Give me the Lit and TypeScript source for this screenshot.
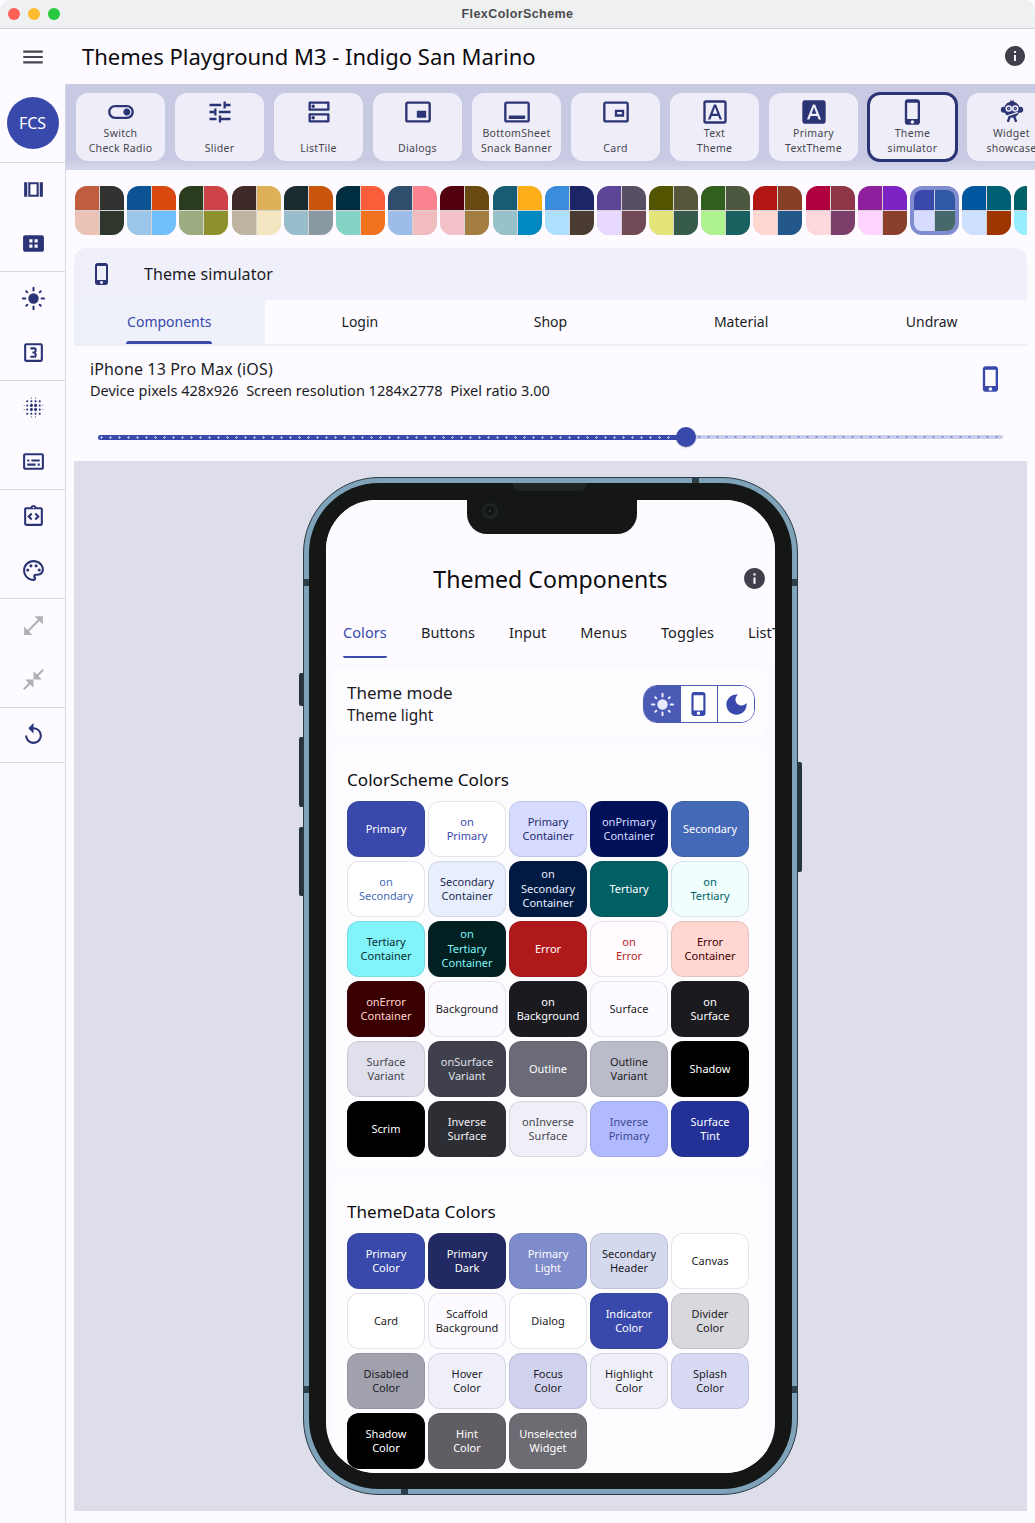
import { LitElement, html, css, svg } from "lit";
import { customElement } from "lit/decorators.js";

// material icon paths, 24x24
const P = {
  menu: "M3 18h18v-2H3v2zm0-5h18v-2H3v2zm0-7v2h18V6H3z",
  info: "M12 2C6.48 2 2 6.48 2 12s4.48 10 10 10 10-4.48 10-10S17.52 2 12 2zm1 15h-2v-6h2v6zm0-8h-2V7h2v2z",
  toggle: "M17 6H7c-3.31 0-6 2.69-6 6s2.69 6 6 6h10c3.31 0 6-2.69 6-6s-2.69-6-6-6zm0 10H7c-2.21 0-4-1.79-4-4s1.79-4 4-4h10c2.21 0 4 1.79 4 4s-1.79 4-4 4zm0-7c-1.66 0-3 1.34-3 3s1.34 3 3 3 3-1.34 3-3-1.34-3-3-3z",
  tune: "M3 17v2h6v-2H3zM3 5v2h10V5H3zm10 16v-2h8v-2h-8v-2h-2v6h2zM7 9v2H3v2h4v2h2V9H7zm14 4v-2H11v2h10zm-6-4h2V7h4V5h-4V3h-2v6z",
  dns: "M19 15v4H5v-4h14m1-2H4c-.55 0-1 .45-1 1v6c0 .55.45 1 1 1h16c.55 0 1-.45 1-1v-6c0-.55-.45-1-1-1zM7 18.5c-.82 0-1.5-.67-1.5-1.5s.68-1.5 1.5-1.5 1.5.67 1.5 1.5-.67 1.5-1.5 1.5zM19 5v4H5V5h14m1-2H4c-.55 0-1 .45-1 1v6c0 .55.45 1 1 1h16c.55 0 1-.45 1-1V4c0-.55-.45-1-1-1zM7 8.5c-.82 0-1.5-.67-1.5-1.5S6.18 5.5 7 5.5s1.5.68 1.5 1.5S7.83 8.5 7 8.5z",
  pip: "M19 11h-8v6h8v-6zm4 8V4.98C23 3.88 22.1 3 21 3H3c-1.1 0-2 .88-2 1.98V19c0 1.1.9 2 2 2h18c1.1 0 2-.9 2-2zm-2 .02H3V4.97h18v14.05z",
  sheet: "M21 3H3c-1.1 0-2 .9-2 2v14c0 1.1.9 2 2 2h18c1.1 0 2-.9 2-2V5c0-1.1-.9-2-2-2zm0 16H3V5h18v14zM5 15h14v3H5z",
  card: "M21 3H3c-1.1 0-2 .9-2 2v14c0 1.1.9 2 2 2h18c1.1 0 2-.9 2-2V5c0-1.1-.9-2-2-2zm0 16H3V5h18v14zM11 10v6h8v-6h-8zm2 2h4v2h-4v-2z",
  font: "M9.17 15.5h5.64l1.14 3h2.09l-5.11-13h-1.86l-5.11 13h2.09l1.12-3zM12 7.98l2.07 5.52H9.93L12 7.98zM20 2H4c-1.1 0-2 .9-2 2v16c0 1.1.9 2 2 2h16c1.1 0 2-.9 2-2V4c0-1.1-.9-2-2-2zm0 18H4V4h16v16z",
  fontFill: "M9.93 13.5h4.14L12 7.98zM20 2H4c-1.1 0-2 .9-2 2v16c0 1.1.9 2 2 2h16c1.1 0 2-.9 2-2V4c0-1.1-.9-2-2-2zm-4.05 16.5l-1.14-3H9.17l-1.12 3H5.96l5.11-13h1.86l5.11 13h-2.09z",
  phone: "M15.5 1h-8C6.12 1 5 2.12 5 3.5v17C5 21.88 6.12 23 7.5 23h8c1.38 0 2.5-1.12 2.5-2.5v-17C18 2.12 16.88 1 15.5 1zm-4 21c-.83 0-1.5-.67-1.5-1.5s.67-1.5 1.5-1.5 1.5.67 1.5 1.5-.67 1.5-1.5 1.5zm4.5-4H7V4h9v14z",
  viewArray: "M3 5h3v14H3zM18 5h3v14h-3zM7 5h10v14H7zM9 7v10h6V7z",
  apps: "M20 4H4c-1.1 0-2 .9-2 2v12c0 1.1.9 2 2 2h16c1.1 0 2-.9 2-2V6c0-1.1-.9-2-2-2zM11 11H8V8h3v3zm5 0h-3V8h3v3zm-5 5H8v-3h3v3zm5 0h-3v-3h3v3z",
  three: "M19 3H5c-1.1 0-2 .9-2 2v14c0 1.1.9 2 2 2h14c1.1 0 2-.9 2-2V5c0-1.1-.9-2-2-2zm0 16H5V5h14v14zm-4-4v-1.5c0-.83-.67-1.5-1.5-1.5.83 0 1.5-.67 1.5-1.5V9c0-1.11-.9-2-2-2H9v2h4v2h-2v2h2v2H9v2h4c1.1 0 2-.89 2-2z",
  blur: "M6 13c-.55 0-1 .45-1 1s.45 1 1 1 1-.45 1-1-.45-1-1-1zm0 4c-.55 0-1 .45-1 1s.45 1 1 1 1-.45 1-1-.45-1-1-1zm0-8c-.55 0-1 .45-1 1s.45 1 1 1 1-.45 1-1-.45-1-1-1zm-3 .5c-.28 0-.5.22-.5.5s.22.5.5.5.5-.22.5-.5-.22-.5-.5-.5zM6 5c-.55 0-1 .45-1 1s.45 1 1 1 1-.45 1-1-.45-1-1-1zm15 5.5c.28 0 .5-.22.5-.5s-.22-.5-.5-.5-.5.22-.5.5.22.5.5.5zM14 7c.55 0 1-.45 1-1s-.45-1-1-1-1 .45-1 1 .45 1 1 1zm0-3.5c.28 0 .5-.22.5-.5s-.22-.5-.5-.5-.5.22-.5.5.22.5.5.5zm-11 10c-.28 0-.5.22-.5.5s.22.5.5.5.5-.22.5-.5-.22-.5-.5-.5zm7 7c-.28 0-.5.22-.5.5s.22.5.5.5.5-.22.5-.5-.22-.5-.5-.5zm0-17c.28 0 .5-.22.5-.5s-.22-.5-.5-.5-.5.22-.5.5.22.5.5.5zM10 7c.55 0 1-.45 1-1s-.45-1-1-1-1 .45-1 1 .45 1 1 1zm0 5.5c-.83 0-1.5.67-1.5 1.5s.67 1.5 1.5 1.5 1.5-.67 1.5-1.5-.67-1.5-1.5-1.5zm8 .5c-.55 0-1 .45-1 1s.45 1 1 1 1-.45 1-1-.45-1-1-1zm0 4c-.55 0-1 .45-1 1s.45 1 1 1 1-.45 1-1-.45-1-1-1zm0-8c-.55 0-1 .45-1 1s.45 1 1 1 1-.45 1-1-.45-1-1-1zm0-4c-.55 0-1 .45-1 1s.45 1 1 1 1-.45 1-1-.45-1-1-1zm3 8.5c-.28 0-.5.22-.5.5s.22.5.5.5.5-.22.5-.5-.22-.5-.5-.5zM14 17c-.55 0-1 .45-1 1s.45 1 1 1 1-.45 1-1-.45-1-1-1zm0 3.5c-.28 0-.5.22-.5.5s.22.5.5.5.5-.22.5-.5-.22-.5-.5-.5zm-4-12c-.83 0-1.5.67-1.5 1.5s.67 1.5 1.5 1.5 1.5-.67 1.5-1.5-.67-1.5-1.5-1.5zm0 8.5c-.55 0-1 .45-1 1s.45 1 1 1 1-.45 1-1-.45-1-1-1zm4-4.5c-.83 0-1.5.67-1.5 1.5s.67 1.5 1.5 1.5 1.5-.67 1.5-1.5-.67-1.5-1.5-1.5zm0-4c-.83 0-1.5.67-1.5 1.5s.67 1.5 1.5 1.5 1.5-.67 1.5-1.5-.67-1.5-1.5-1.5z",
  subtitles: "M20 4H4c-1.1 0-2 .9-2 2v12c0 1.1.9 2 2 2h16c1.1 0 2-.9 2-2V6c0-1.1-.9-2-2-2zm0 14H4V6h16v12zM6 10h2v2H6zm0 4h8v2H6zm10 0h2v2h-2zm-6-4h8v2h-8z",
  code: "M11 14.17 8.83 12 11 9.83 9.59 8.41 6 12l3.59 3.59zM14.41 15.59 18 12l-3.59-3.59L13 9.83 15.17 12 13 14.17zM19 3h-4.18C14.4 1.84 13.3 1 12 1c-1.3 0-2.4.84-2.82 2H5c-.14 0-.27.01-.4.04-.39.08-.74.28-1.01.55-.18.18-.33.4-.43.64-.1.23-.16.49-.16.77v14c0 .27.06.54.16.78s.25.45.43.64c.27.27.62.47 1.01.55.13.02.26.03.4.03h14c1.1 0 2-.9 2-2V5c0-1.1-.9-2-2-2zm0 16H5V5h14v14zM12 2.75c.41 0 .75.34.75.75s-.34.75-.75.75-.75-.34-.75-.75.34-.75.75-.75z",
  palette: "M12 22C6.49 22 2 17.51 2 12S6.49 2 12 2s10 4.04 10 9c0 3.31-2.69 6-6 6h-1.77c-.28 0-.5.22-.5.5 0 .12.05.23.13.33.41.47.64 1.06.64 1.67A2.5 2.5 0 0 1 12 22zm0-18c-4.41 0-8 3.59-8 8s3.59 8 8 8c.28 0 .5-.22.5-.5a.54.54 0 0 0-.14-.35c-.41-.46-.63-1.05-.63-1.65a2.5 2.5 0 0 1 2.5-2.5H16c2.21 0 4-1.79 4-4 0-3.86-3.59-7-8-7zM6.5 10a1.5 1.5 0 1 0 0 3 1.5 1.5 0 0 0 0-3zM9.5 6a1.5 1.5 0 1 0 0 3 1.5 1.5 0 0 0 0-3zM14.5 6a1.5 1.5 0 1 0 0 3 1.5 1.5 0 0 0 0-3zM17.5 10a1.5 1.5 0 1 0 0 3 1.5 1.5 0 0 0 0-3z",
  expand: "M21 11V3h-8l3.29 3.29-10 10L3 13v8h8l-3.29-3.29 10-10z",
  collapse: "M22 3.41l-5.29 5.3L20 12h-8V4l3.29 3.29L20.59 2 22 3.41zM3.41 22l5.3-5.29L12 20v-8H4l3.29 3.29L2 20.59 3.41 22z",
  replay: "M12 5V1L7 6l5 5V7c3.31 0 6 2.69 6 6s-2.69 6-6 6-6-2.69-6-6H4c0 4.42 3.58 8 8 8s8-3.58 8-8-3.58-8-8-8z",
  moon: "M12 3c-4.97 0-9 4.03-9 9s4.03 9 9 9 9-4.03 9-9c0-.46-.04-.92-.1-1.36-.98 1.37-2.58 2.26-4.4 2.26-2.98 0-5.4-2.42-5.4-5.4 0-1.81.89-3.42 2.26-4.4-.44-.06-.9-.1-1.36-.1z",
  sun: "M12 7a5 5 0 1 0 0 10 5 5 0 0 0 0-10zM1.800 11h2.400a1 1 0 0 1 0 2H1.800a1 1 0 0 1 0-2zM19.800 11h2.400a1 1 0 0 1 0 2h-2.400a1 1 0 0 1 0-2zM11 1.800a1 1 0 0 1 2 0v2.400a1 1 0 0 1-2 0V1.800zM11 19.800a1 1 0 0 1 2 0v2.400a1 1 0 0 1-2 0v-2.400zM4.300 5.700a1 1 0 0 1 1.400-1.400l1.100 1.100a1 1 0 0 1-1.400 1.400zM17.200 18.600a1 1 0 0 1 1.400-1.400l1.100 1.100a1 1 0 0 1-1.400 1.400zM18.300 4.300a1 1 0 0 1 1.400 1.400l-1.100 1.100a1 1 0 0 1-1.400-1.400zM5.400 17.200a1 1 0 0 1 1.400 1.400l-1.100 1.100a1 1 0 0 1-1.400-1.400z",
};

// the little monkey of the widget showcase button
const monkey = svg`
  <circle cx="5" cy="10" r="2.600" /><circle cx="19" cy="10" r="2.600" />
  <path d="M11 1.500l1 1.300 1-1.300.6 1.800c3.100.9 5.100 3.300 5.100 6.400 0 2.900-1.500 5.100-3.700 6.300l1.600 4.200-2 .6-1.500-4c-.7.100-1.500.1-2.200 0l-1.500 4-2-.6 1.600-4.200C6.800 14.800 5.300 12.600 5.300 9.700c0-3.100 2-5.500 5.100-6.400z" />
  <circle cx="9.200" cy="9" r="2.800" fill="#efedf7" /><circle cx="14.800" cy="9" r="2.800" fill="#efedf7" />
  <circle cx="9.200" cy="9" r="1.400" /><circle cx="14.800" cy="9" r="1.400" />
  <circle cx="9.200" cy="9" r=".5" fill="#efedf7" /><circle cx="14.800" cy="9" r=".5" fill="#efedf7" />
  <path d="M7.500 15.500l9.500-3.200" stroke="#efedf7" stroke-width="1.200" fill="none" />`;

type Tool = [string, string, string | null, boolean?];
const TOOLS: Tool[] = [
  ["Switch\nCheck Radio", P.toggle, null],
  ["Slider", P.tune, null],
  ["ListTile", P.dns, null],
  ["Dialogs", P.pip, null],
  ["BottomSheet\nSnack Banner", P.sheet, null],
  ["Card", P.card, null],
  ["Text\nTheme", P.font, null],
  ["Primary\nTextTheme", P.fontFill, null],
  ["Theme\nsimulator", P.phone, null, true],
  ["Widget\nshowcase", "", "monkey"],
];

const SWATCHES = [
  ["#c05d3f", "#303330", "#ebc2b6", "#2f372c"],
  ["#0c5396", "#d9480f", "#9bc6ea", "#70bffa"],
  ["#2b3b1d", "#cd4348", "#9cac80", "#8c912d"],
  ["#402a27", "#deb059", "#bfb3a1", "#f3e5bf"],
  ["#1b2c30", "#c9560a", "#98bdcd", "#8a98a1"],
  ["#012d41", "#f95d3a", "#84d4c6", "#f1721f"],
  ["#2f4d6d", "#fa838f", "#9cbce9", "#f0bcbf"],
  ["#530010", "#694911", "#f3c2c9", "#a47e40"],
  ["#165c73", "#feae18", "#98c2ca", "#0088c0"],
  ["#3a8cdc", "#1c2566", "#ace0fe", "#4a3c33"],
  ["#5d4597", "#584f65", "#e6d8fe", "#714a55"],
  ["#525400", "#57553a", "#e3e47a", "#365b4b"],
  ["#315f1d", "#4c5840", "#aef38e", "#196060"],
  ["#b11613", "#893f26", "#ffd6d0", "#23578a"],
  ["#b10040", "#8f3648", "#ffd8de", "#7c3f6c"],
  ["#8e1f9d", "#7d22c3", "#fcd4ff", "#8a402b"],
  ["#3949ab", "#3158a4", "#d7dbff", "#47696c"],
  ["#00579f", "#006073", "#cde0ff", "#9d3600"],
  ["#006068", "#00596b", "#96eeff", "#7c3f2a"],
];
const SELECTED_SWATCH = 16;

const RAIL = [
  [[P.viewArray], [P.apps]],
  [[P.sun], [P.three]],
  [[P.blur], [P.subtitles]],
  [[P.code], [P.palette]],
  [[P.expand, "off"], [P.collapse, "off"]],
  [[P.replay]],
];

const SCHEME = [
  ["Primary", "#3949ab", "#fff"],
  ["on\nPrimary", "#fff", "#3949ab"],
  ["Primary\nContainer", "#d7dbff", "#1c2a6e"],
  ["onPrimary\nContainer", "#00115a", "#d7dbff"],
  ["Secondary", "#4469b6", "#fff"],
  ["on\nSecondary", "#fff", "#4469b6"],
  ["Secondary\nContainer", "#e9eeff", "#1d2c4c"],
  ["on\nSecondary\nContainer", "#001a41", "#e9eeff"],
  ["Tertiary", "#006064", "#fff"],
  ["on\nTertiary", "#f0fffe", "#006064"],
  ["Tertiary\nContainer", "#80f4f9", "#0a2c30"],
  ["on\nTertiary\nContainer", "#002022", "#80f4f9"],
  ["Error", "#b01919", "#fff"],
  ["on\nError", "#fffbff", "#b3261e"],
  ["Error\nContainer", "#ffd6d0", "#410002"],
  ["onError\nContainer", "#3a0000", "#ffd6d0"],
  ["Background", "#fdfbff", "#1b1b1f"],
  ["on\nBackground", "#1b1b1f", "#fdfbff"],
  ["Surface", "#fdfbff", "#1b1b1f"],
  ["on\nSurface", "#1b1b1f", "#fdfbff"],
  ["Surface\nVariant", "#dfe0eb", "#45464f"],
  ["onSurface\nVariant", "#3f404b", "#dfe0eb"],
  ["Outline", "#6a6b76", "#fff"],
  ["Outline\nVariant", "#bbbcc9", "#1b1b1f"],
  ["Shadow", "#000", "#fff"],
  ["Scrim", "#000", "#fff"],
  ["Inverse\nSurface", "#2d2e33", "#f2f0f7"],
  ["onInverse\nSurface", "#f0eff7", "#46474f"],
  ["Inverse\nPrimary", "#b1baff", "#3e4a8f"],
  ["Surface\nTint", "#233197", "#fff"],
];

const THEMEDATA = [
  ["Primary\nColor", "#3949ab", "#fff"],
  ["Primary\nDark", "#232a63", "#fff"],
  ["Primary\nLight", "#7f8ccb", "#fff"],
  ["Secondary\nHeader", "#d5d9ee", "#1b1b1f"],
  ["Canvas", "#fff", "#1b1b1f"],
  ["Card", "#fff", "#1b1b1f"],
  ["Scaffold\nBackground", "#fdfbff", "#1b1b1f"],
  ["Dialog", "#fff", "#1b1b1f"],
  ["Indicator\nColor", "#3949ab", "#fff"],
  ["Divider\nColor", "#d9d8dc", "#1b1b1f"],
  ["Disabled\nColor", "#a2a2ae", "#1b1b1f"],
  ["Hover\nColor", "#efeffa", "#1b1b1f"],
  ["Focus\nColor", "#d1d3ee", "#1b1b1f"],
  ["Highlight\nColor", "#efeffa", "#1b1b1f"],
  ["Splash\nColor", "#d7daf2", "#1b1b1f"],
  ["Shadow\nColor", "#000", "#fff"],
  ["Hint\nColor", "#605e63", "#fff"],
  ["Unselected\nWidget", "#6d6c72", "#fff"],
];

const icon = (d: string, size = 24) => html`<svg class="icon" width=${size} height=${size} viewBox="0 0 24 24" fill="currentColor"><path fill-rule="evenodd" d=${d}></path></svg>`;

@customElement("app-root")
export class AppRoot extends LitElement {
  static override styles = css`
    :host {
      display: block;
      width: 1035px;
      height: 1523px;
      overflow: hidden;
      font-family: "Noto Sans", sans-serif;
      color: #1b1b1f;
      background: #fdfbff;
    }
    .icon { display: block; flex: none; }

    .titlebar {
      height: 28px;
      box-sizing: content-box;
      border-bottom: 1px solid #d2d3d5;
      background: #eff0f1;
      border-radius: 10px 10px 0 0;
      display: flex;
      align-items: center;
      justify-content: center;
      position: relative;
      font: bold 12.5px "Liberation Sans", sans-serif;
      letter-spacing: 0.42px;
      color: #4a4b4d;
    }
    .lights { position: absolute; left: 8px; top: 8px; display: flex; gap: 8px; }
    .lights i { width: 12px; height: 12px; border-radius: 50%; }
    .appbar { height: 55px; display: flex; align-items: center; background: #fdfbff; }
    .appbar .burger { width: 66px; display: flex; justify-content: center; color: #45464f; }
    .appbar h1 { flex: 1; margin: -2px 0 0 16px; font-size: 22px; font-weight: 400; color: #0c0c10; }
    .appbar .info { margin: -2px 8px 0 0; color: #3f404b; }

    .body { display: flex; height: 1439px; }
    .rail { width: 65px; flex: none; border-right: 1px solid #d8d8dc; }
    .avatar-wrap { height: 78px; display: flex; align-items: center; justify-content: center; border-bottom: 1px solid #dcdce0; }
    .avatar { width: 52px; height: 52px; border-radius: 50%; background: #3949ab; color: #fff; font-size: 16px; display: flex; align-items: center; justify-content: center; }
    .group { border-bottom: 1px solid #dcdce0; }
    .rail-item { height: 54px; box-sizing: border-box; padding: 0 0 2px 1px; display: flex; align-items: center; justify-content: center; color: #2b3475; }
    .rail-item.off { color: #b1b1b4; }

    .main { flex: 1; min-width: 0; }
    .tools { height: 86px; box-sizing: border-box; padding: 9px 0 0 10px; display: flex; gap: 10px; overflow: hidden; background: linear-gradient(#c8cae4 88%, #d6d8ec); }
    .tool { flex: none; width: 89px; height: 68px; box-sizing: border-box; border-radius: 12px; background: #efedf7; display: flex; flex-direction: column; align-items: center; padding-top: 5px; color: #2b3475; }
    .tool.on { outline: 3px solid #2b3475; outline-offset: -2px; }
    .tool span { height: 30px; display: flex; align-items: flex-end; text-align: center; white-space: pre-line; font-size: 10.5px; line-height: 15px; letter-spacing: 0.3px; color: #45464f; }

    .swatches { margin: 16px 8px 0 9px; display: flex; gap: 3.2px; overflow: hidden; }
    .swatch { flex: none; width: 49px; height: 49px; box-sizing: border-box; border-radius: 12px; overflow: hidden; display: grid; grid-template-columns: 1fr 1fr; grid-template-rows: 1fr 1fr; gap: 1px; background: #d8d3d3; }
    .swatch.on { border: 4px solid #7f8ccf; background: #c9cbe0; }

    .panel { margin: 13px 8px 0; }
    .panel-head { height: 52px; background: #f0f0fa; border-radius: 12px 12px 0 0; display: flex; align-items: center; padding-left: 16px; gap: 30px; font-size: 16px; letter-spacing: 0.08px; color: #2b3475; }
    .panel-head b { font-weight: 400; color: #1b1b1f; }
    .panel-tabs { display: grid; grid-template-columns: repeat(5, 1fr); border-bottom: 2px solid #efeff8; height: 44px; font-size: 14px; }
    .panel-tabs div { display: flex; align-items: center; justify-content: center; padding-bottom: 2px; position: relative; }
    .panel-tabs .on { background: #eef0fa; color: #3949ab; }
    .panel-tabs .on::after { content: ""; position: absolute; left: 52px; bottom: 0; width: 86px; height: 3px; border-radius: 3px 3px 0 0; background: #3949ab; }
    .device { height: 115px; box-sizing: border-box; padding: 12px 16px 0; position: relative; }
    .device-top { display: flex; justify-content: space-between; color: #3949ab; }
    .device .name { font-size: 16px; line-height: 22px; letter-spacing: 0.13px; color: #1b1b1f; }
    .device .meta { font-size: 14.5px; line-height: 20px; color: #1b1b1f; white-space: pre; }
    .device-top .icon { margin: 7px 6px 0 0; }
    .slider { display: flex; align-items: center; height: 10px; margin: 32px 8px 0; position: relative; }
    .slider .active { width: 588px; height: 5px; border-radius: 3px 0 0 3px; background: radial-gradient(circle, #aab3e6 1px, transparent 1.2px) -1px 0 / 9px 5px, #3949ab; }
    .slider .rest { flex: 1; height: 4px; border-radius: 0 2px 2px 0; background: radial-gradient(circle, #7f8ccb 1px, transparent 1.2px) 0 0 / 9px 4px, #cbcdea; }
    .slider .thumb { position: absolute; left: 578px; top: -5px; width: 20px; height: 20px; border-radius: 50%; background: #3949ab; box-shadow: 0 1px 2px rgba(0,0,0,.2); }

    .stage { height: 1050px; box-sizing: border-box; background: #dddeea; padding-top: 16px; display: flex; justify-content: center; }
    .phone { position: relative; flex: none; width: 495px; height: 1018px; box-sizing: border-box; border: 1px solid #2b3a44; border-radius: 76px; background: #7fa3b8; padding: 5px; }
    .bezel { height: 100%; box-sizing: border-box; background: #141716; border-radius: 70px; padding: 17px 17px 16px; }
    .screen { position: relative; height: 100%; background: #fbfaff; border-radius: 50px; overflow: hidden; }
    .band { position: absolute; background: #2d3f4a; }
    .band.top { left: 388px; top: -1px; width: 7px; height: 6px; }
    .band.bottom { left: 97px; bottom: -1px; width: 7px; height: 6px; }
    .band.l1, .band.l2 { left: -1px; width: 6px; height: 7px; }
    .band.r1, .band.r2 { right: -1px; width: 6px; height: 7px; }
    .band.l1, .band.r1 { top: 101px; }
    .band.l2, .band.r2 { top: 908px; }
    .btn { position: absolute; width: 4px; background: #26343e; }
    .btn.left { left: -5px; border-radius: 2px 0 0 2px; }
    .btn.right { right: -5px; top: 284px; height: 110px; border-radius: 0 2px 2px 0; }
    .speaker { position: absolute; left: 209px; top: 5px; width: 73px; height: 8px; background: #1f2526; border-radius: 0 0 6px 6px; z-index: 2; }
    .notch { position: absolute; left: 141px; top: 0; width: 170px; height: 34px; background: #141716; border-radius: 0 0 20px 20px; z-index: 2; }
    .camera { position: absolute; left: 15px; top: 3px; width: 16px; height: 16px; box-sizing: border-box; border-radius: 50%; border: 3px solid #1e2426; display: flex; align-items: center; justify-content: center; }
    .camera::after { content: ""; width: 2px; height: 2px; border-radius: 50%; background: #38424a; }

    .sim-top { background: #fdfbff; padding-top: 52px; }
    .sim-title { height: 56px; display: grid; grid-template-columns: 1fr auto 1fr; align-items: center; font-size: 23.1px; color: #0c0c10; }
    .sim-title span { margin-top: -2px; }
    .sim-title .icon { justify-self: end; margin: -4px 8px 0 0; color: #3f404b; }
    .sim-tabs { display: flex; gap: 34px; height: 50px; padding-left: 17px; overflow: hidden; font-size: 14.5px; letter-spacing: 0.08px; color: #1b1b1f; }
    .sim-tabs div { flex: none; height: 50px; box-sizing: border-box; padding-top: 13px; line-height: 22px; border-bottom: 2.5px solid transparent; }
    .sim-tabs .on { color: #3949ab; border-bottom-color: #3949ab; border-radius: 0 0 2px 2px; }
    .sim-card { margin: 0 8px 7px 7px; background: #fdfcff; border-radius: 12px; padding: 0 14px; }
    .mode { margin-top: 9px; height: 71px; box-sizing: border-box; display: flex; align-items: center; justify-content: space-between; padding-right: 12px; padding-top: 3px; }
    .mode .t1 { font-size: 17px; line-height: 22px; }
    .mode .t2 { font-size: 15.4px; line-height: 22px; margin-top: 1px; }
    .segments { display: flex; width: 112px; height: 38px; box-sizing: border-box; border: 1px solid #4a5ab5; border-radius: 14px; overflow: hidden; color: #3949ab; }
    .segments div { flex: 1; display: flex; align-items: center; justify-content: center; background: #fff; }
    .segments div + div { border-left: 1px solid #4a5ab5; }
    .segments .on { background: #4a5ab5; color: #e8ebff; }
    .colors { padding-top: 22px; padding-bottom: 13px; }
    .colors h2 { margin: 0 0 8px; font-size: 17.1px; font-weight: 400; line-height: 26px; color: #0c0c10; }
    .grid { display: grid; grid-template-columns: repeat(5, 78px); grid-auto-rows: 56px; gap: 4px 3px; }
    .cell { box-sizing: border-box; border: 1px solid rgba(40, 40, 70, 0.12); border-radius: 12px; display: flex; align-items: center; justify-content: center; text-align: center; white-space: pre-line; font-size: 11px; line-height: 14.5px; }
  `;

  private _colors(title: string, items: string[][]) {
    return html`
      <div class="sim-card colors">
        <h2>${title}</h2>
        <div class="grid">
          ${items.map(([label, bg, fg]) => html`<div class="cell" style="background:${bg};color:${fg}">${label}</div>`)}
        </div>
      </div>
    `;
  }

  private _phone() {
    return html`
      <div class="phone">
        <span class="band top"></span><span class="band bottom"></span>
        <span class="band l1"></span><span class="band l2"></span>
        <span class="band r1"></span><span class="band r2"></span>
        <span class="btn left" style="top:195px;height:33px"></span>
        <span class="btn left" style="top:259px;height:70px"></span>
        <span class="btn left" style="top:349px;height:69px"></span>
        <span class="btn right"></span>
        <span class="speaker"></span>
        <div class="bezel">
          <div class="screen">
            <div class="notch"><span class="camera"></span></div>
            <div class="sim-top">
              <div class="sim-title"><span></span><span>Themed Components</span>${icon(P.info, 25)}</div>
              <div class="sim-tabs">
                <div class="on">Colors</div><div>Buttons</div><div>Input</div><div>Menus</div><div>Toggles</div><div>ListTiles</div>
              </div>
            </div>
            <div class="sim-card mode">
              <div><div class="t1">Theme mode</div><div class="t2">Theme light</div></div>
              <div class="segments">
                <div class="on">${icon(P.sun, 25)}</div>
                <div>${icon(P.phone, 26)}</div>
                <div>${icon(P.moon, 27)}</div>
              </div>
            </div>
            ${this._colors("ColorScheme Colors", SCHEME)}
            ${this._colors("ThemeData Colors", THEMEDATA)}
          </div>
        </div>
      </div>
    `;
  }

  override render() {
    return html`
      <div class="titlebar">
        <div class="lights">
          <i style="background:#fe5f57"></i><i style="background:#febc2e"></i><i style="background:#28c840"></i>
        </div>
        FlexColorScheme
      </div>
      <div class="appbar">
        <div class="burger">${icon(P.menu, 26)}</div>
        <h1>Themes Playground M3 - Indigo San Marino</h1>
        <div class="info">${icon(P.info, 24)}</div>
      </div>
      <div class="body">
        <nav class="rail">
          <div class="avatar-wrap"><div class="avatar">FCS</div></div>
          ${RAIL.map((group) => html`
            <div class="group">
              ${group.map(([d, off]) => html`<div class="rail-item ${off ?? ""}">${icon(d, 25)}</div>`)}
            </div>
          `)}
        </nav>
        <div class="main">
          <div class="tools">
            ${TOOLS.map(([label, d, special, on]) => html`
              <div class="tool ${on ? "on" : ""}">
                ${special
                  ? html`<svg class="icon" width="28" height="28" viewBox="0 0 24 24" fill="currentColor">${monkey}</svg>`
                  : icon(d, 28)}
                <span>${label}</span>
              </div>
            `)}
          </div>
          <div class="swatches">
            ${SWATCHES.map((c, i) => html`
              <div class="swatch ${i === SELECTED_SWATCH ? "on" : ""}">
                ${c.map((col) => html`<div style="background:${col}"></div>`)}
              </div>
            `)}
          </div>
          <section class="panel">
            <div class="panel-head">${icon(P.phone, 24)}<b>Theme simulator</b></div>
            <div class="panel-tabs">
              <div class="on">Components</div><div>Login</div><div>Shop</div><div>Material</div><div>Undraw</div>
            </div>
            <div class="device">
              <div class="device-top">
                <div>
                  <div class="name">iPhone 13 Pro Max (iOS)</div>
                  <div class="meta">Device pixels 428x926  Screen resolution 1284x2778  Pixel ratio 3.00</div>
                </div>
                ${icon(P.phone, 28)}
              </div>
              <div class="slider">
                <div class="active"></div><div class="rest"></div><div class="thumb"></div>
              </div>
            </div>
            <div class="stage">${this._phone()}</div>
          </section>
        </div>
      </div>
    `;
  }
}
